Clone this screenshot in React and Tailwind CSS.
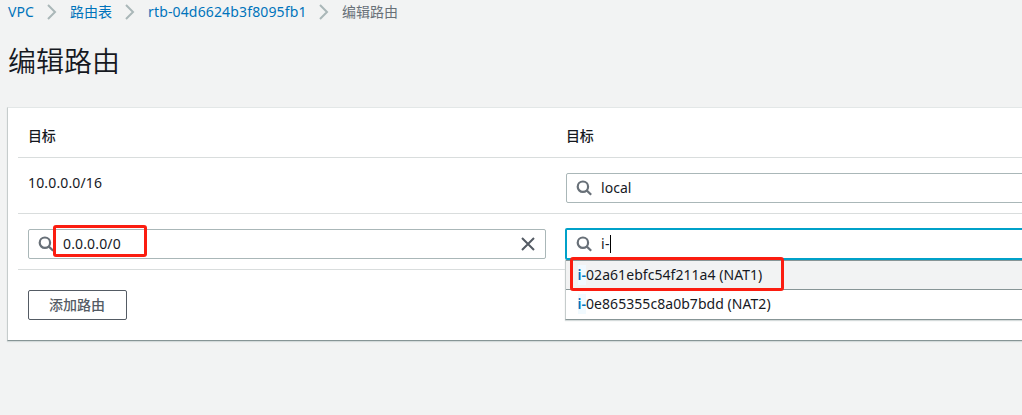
import React from "react";

function SearchIcon() {
  return (
    <svg className="h-4 w-4 shrink-0" viewBox="0 0 16 16" fill="none" stroke="#687078" strokeWidth="2.2">
      <circle cx="6.9" cy="6.7" r="5.2" />
      <path d="M10.6 10.4 L15.2 14.8" />
    </svg>
  );
}

function Chevron() {
  return (
    <svg className="h-4 w-[10px] shrink-0" viewBox="0 0 10 16" fill="none" stroke="#aab7b8" strokeWidth="2">
      <path d="M1 1 L8 8 L1 15" />
    </svg>
  );
}

function Option({ rest, active }) {
  return (
    <li
      className={
        active
          ? "flex h-[30px] items-center whitespace-pre border-y border-[#879596] bg-[#f2f3f3] pl-[11.5px]"
          : "flex h-[28px] items-center whitespace-pre pl-[11.5px]"
      }
    >
      <span className="bg-[#f1faff] font-semibold text-[#0073bb]">i-</span>
      <span>{rest}</span>
    </li>
  );
}

export default function App() {
  return (
    <div className="h-[415px] w-[1022px] overflow-hidden bg-[#f2f3f3] font-['Noto_Sans','Noto_Sans_CJK_SC',sans-serif] text-[14px] leading-5 tracking-[0.05px] text-[#16191f]">
      <nav className="flex h-6 items-center pl-2 text-[#0073bb]">
        <a className="w-[39px]">VPC</a>
        <Chevron />
        <a className="ml-[13px] w-[55px] tracking-normal">路由表</a>
        <Chevron />
        <a className="ml-[13px] w-[171px] tracking-[0.15px]">rtb-04d6624b3f8095fb1</a>
        <Chevron />
        <span className="ml-[13px] tracking-normal text-[#687078]">编辑路由</span>
      </nav>
      <h1 className="mt-[17px] pl-2 text-[28px] font-[350] leading-10 tracking-normal">编辑路由</h1>

      <main className="ml-[7px] mt-[26px] h-[234px] w-[1030px] border-b border-l border-t border-b-[#879596] border-l-[#c6cccc] border-t-[#e3e7e7] bg-white pl-[10px] shadow-[0_1px_1px_#d5dbdb]">
        <div className="flex h-[50px] items-center border-b border-[#d9dddd] pl-[10px] pt-[7px] font-medium tracking-[-0.2px]">
          <div className="w-[538px]">目标</div>
          <div>目标</div>
        </div>
        <div className="flex h-14 border-b border-[#d9dddd] pl-[10px]">
          <div className="w-[538px] pt-[15px] tracking-[0.15px]">10.0.0.0/16</div>
          <div className="mt-[15px] flex h-[30px] flex-1 items-center gap-[9px] rounded-[2px] border border-[#aab7b8] pl-[9px]">
            <SearchIcon />
            <span>local</span>
          </div>
        </div>
        <div className="flex h-14 border-b border-[#d9dddd] pl-[10px]">
          <div className="relative mt-[15px] flex h-[30px] w-[518px] items-center gap-[9px] rounded-[2px] border border-[#aab7b8] pl-[9px]">
            <SearchIcon />
            <span className="tracking-[0.15px]">0.0.0.0/0</span>
            <svg className="ml-auto mr-[10px] h-[14px] w-[14px]" viewBox="0 0 14 14" fill="none" stroke="#545b64" strokeWidth="2">
              <path d="M1 1 L13 13 M13 1 L1 13" />
            </svg>
            <div className="absolute left-[24px] top-[-5px] h-[32px] w-[94px] rounded-[3px] border-[3px] border-[#fb1d10]" />
          </div>
          <div className="relative ml-[19px] mt-[14px] flex h-8 flex-1 items-center gap-[9px] rounded-[2px] border-2 border-[#00a1c9] bg-white pl-[9px]">
            <SearchIcon />
            <span className="flex items-center tracking-[0.3px]">
              i-
              <i className="h-[18px] w-px bg-black" />
            </span>
            <ul className="absolute left-[-2px] right-0 top-[30px] z-10 h-[60px] border-b border-l border-b-[#879596] border-l-[#c6cccc] bg-white shadow-[0_1px_1px_#d5dbdb]">
              <Option rest="02a61ebfc54f211a4 (NAT1)" active />
              <Option rest="0e865355c8a0b7bdd (NAT2)" />
            </ul>
            <div className="absolute left-[3px] top-[27px] z-20 h-[34px] w-[214px] rounded-[3px] border-[3px] border-[#fb1d10]" />
          </div>
        </div>
        <button className="ml-[10px] mt-5 h-[30px] w-[99px] rounded-[2px] border border-[#545b64] pr-px font-medium tracking-normal text-[#545b64]">
          添加路由
        </button>
      </main>
    </div>
  );
}
